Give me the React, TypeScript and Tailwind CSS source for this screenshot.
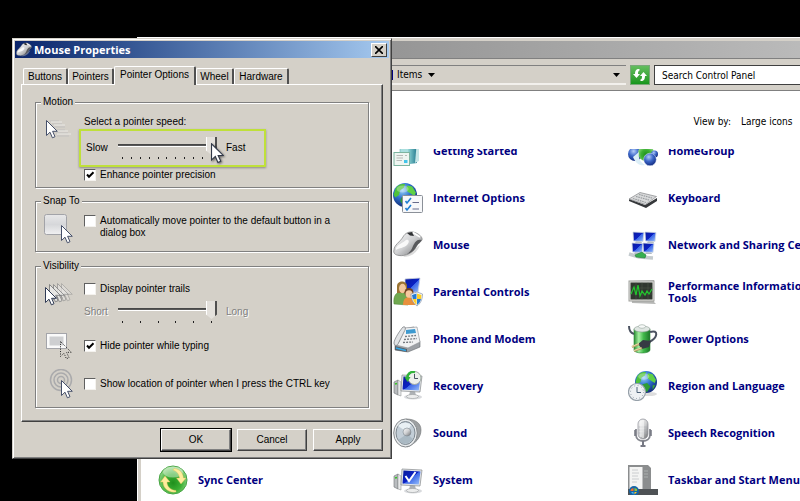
import type { ReactNode } from 'react'
import { clsx } from 'clsx'

/* ---------- Shared icon pieces ---------- */

function Gradients() {
  return (
    <svg className="absolute size-0" aria-hidden="true">
      <defs>
        <linearGradient id="silver" x1="0" y1="0" x2="1" y2="1">
          <stop offset="0" stopColor="#fdfdfd" />
          <stop offset=".5" stopColor="#cfd0d2" />
          <stop offset="1" stopColor="#6d6e70" />
        </linearGradient>
        <linearGradient id="screen" x1="0" y1="0" x2="1" y2="1">
          <stop offset="0" stopColor="#0a1a9c" />
          <stop offset=".5" stopColor="#0b22c4" />
          <stop offset=".52" stopColor="#3b66e8" />
          <stop offset="1" stopColor="#9cc4fb" />
        </linearGradient>
        <radialGradient id="ocean" cx=".4" cy=".3" r=".75">
          <stop offset="0" stopColor="#9fd4f7" />
          <stop offset=".45" stopColor="#2f74cf" />
          <stop offset="1" stopColor="#10256f" />
        </radialGradient>
        <radialGradient id="blueBall" cx=".4" cy=".3" r=".7">
          <stop offset="0" stopColor="#b4cdfa" />
          <stop offset=".5" stopColor="#3c67c8" />
          <stop offset="1" stopColor="#142c82" />
        </radialGradient>
        <radialGradient id="greenBall" cx=".5" cy=".6" r=".6">
          <stop offset="0" stopColor="#1f8f1c" />
          <stop offset=".5" stopColor="#3cb034" />
          <stop offset="1" stopColor="#9fdc94" />
        </radialGradient>
        <linearGradient id="battery" x1="0" y1="0" x2="1" y2="0">
          <stop offset="0" stopColor="#2b8f35" />
          <stop offset=".3" stopColor="#a5efa0" />
          <stop offset=".6" stopColor="#3fb849" />
          <stop offset="1" stopColor="#1d7529" />
        </linearGradient>
        <linearGradient id="book" x1="0" y1="0" x2="1" y2="0">
          <stop offset="0" stopColor="#8fd5d6" />
          <stop offset="1" stopColor="#23798e" />
        </linearGradient>
      </defs>
    </svg>
  )
}

function Icon({ children }: { children: ReactNode }) {
  return (
    <svg viewBox="0 0 30 30" className="size-[30px] shrink-0" aria-hidden="true">
      {children}
    </svg>
  )
}

const cursorPath = 'M.5 .5V15.5L4 12.2L6.4 17.8L9 16.7L6.6 11.3H11.3Z'

function Globe({ x, y, r }: { x: number; y: number; r: number }) {
  return (
    <g transform={`translate(${x} ${y}) scale(${r / 10})`}>
      <circle r="10" fill="url(#ocean)" />
      <path d="M-8 -5C-6 -9 -2 -9.500 0 -9L-1 -6L-4 -4L-5 0L-8 2L-9.500 0Z" fill="#4fc23a" />
      <path d="M2 -8L6 -7L9 -2L8 1L5 -1L2 -3L1 -6Z" fill="#5fd045" />
      <path d="M-3 2L1 1L4 4L1 9L-2 8L-4 5Z" fill="#2f9d35" />
      <path d="M6 3L8.500 3L6 7Z" fill="#3fae38" />
      <ellipse cx="-2" cy="-5" rx="5" ry="3" fill="#fff" opacity=".3" />
    </g>
  )
}

function Monitor() {
  return (
    <>
      <ellipse cx="20" cy="26" rx="9" ry="2.500" fill="#d8dadd" />
      <path d="M1 11L5 9V24L1 22Z" fill="#b9bcbf" stroke="#6f7276" strokeWidth=".6" />
      <path d="M5 9L8 11V25L5 24Z" fill="#e8e9ea" stroke="#85888b" strokeWidth=".5" />
      <path d="M2 13L4 12.500" stroke="#35c423" strokeWidth="1.500" />
      <path d="M17 20H22L23 25H16Z" fill="#aeb2b6" />
      <ellipse cx="19.500" cy="25.500" rx="6" ry="2" fill="#eceded" stroke="#9a9da0" strokeWidth=".6" />
      <path d="M9 4L29 5L27 21L8 20Z" fill="#e5e7e9" stroke="#85898d" strokeWidth=".7" />
      <path d="M10.500 5.500L27.500 6.500L25.800 19.500L9.500 18.500Z" fill="url(#screen)" />
    </>
  )
}

function MouseShape() {
  return (
    <>
      <path d="M10 27C18 27 24 23 27 15L20 20Z" fill="#b8b8b8" opacity=".5" />
      <path d="M1 20C1 15 7 12 10 7C12 3 16 1.500 20 2C25 3 30 7 29 10C27 13 25 13 23 17C20 23 12 26.500 6 25.500C2 25 0 23 1 20Z" fill="url(#silver)" stroke="#7b7c7e" strokeWidth=".7" />
      <path d="M28.500 10C24 8.500 22 12 20 16C18.500 20 17 22 14 24C20 22.500 22 19 24 15.500C25.500 13 28 12.500 28.500 10Z" fill="#58595c" />
      <path d="M14 3L17 5.500L21 6L19 2Z" fill="#303235" />
      <path d="M20 2.500L27 7" stroke="#fff" strokeWidth="1.500" />
      <path d="M3 18C5 14 10 13 13 10C16 9 17 12 14 15C11 18 6 18 3 20Z" fill="#fff" opacity=".85" />
    </>
  )
}

/* ---------- Control panel icons ---------- */

const icons: Record<string, ReactNode> = {
  start: (
    <>
      <path d="M7 3L16 1V22L7 22Z" fill="#a9dede" stroke="#57a3a8" strokeWidth=".5" />
      <path d="M15 2L24 0V27L17 28Z" fill="url(#book)" />
      <path d="M24 4L26 5V25L22 27Z" fill="#c5e5e6" />
      <rect x="1" y="16.500" width="15.500" height="13" fill="#eef5f1" stroke="#7db4a0" />
      <path d="M3.500 19.500H10M3.500 22H10M3.500 24.500H9M12 19.500H14" stroke="#aaa" strokeWidth=".8" />
      <rect x="11" y="24" width="3.500" height="3" fill="#42c4ea" />
    </>
  ),
  internet: (
    <>
      <Globe x={12} y={12} r={12} />
      <rect x="9.500" y="12.500" width="20" height="17" rx="1" fill="#f7f8fa" stroke="#8b9098" />
      <path d="M12.500 18L14 20L18 15M12.500 25L14 27L18 22" fill="none" stroke="#1f7dd1" strokeWidth="1.600" />
      <path d="M19.500 19.500H26M19.500 26H26" stroke="#676c8c" strokeWidth="1.200" />
    </>
  ),
  mouse: <MouseShape />,
  parental: (
    <>
      <path d="M12 2L27 1L25 15L12 16Z" fill="url(#screen)" stroke="#cdd3dc" strokeWidth=".8" />
      <path d="M1 27C0 19 3 15 8 15C13 15 16 19 15 28Z" fill="#70a950" stroke="#477c31" strokeWidth=".5" />
      <path d="M4 9C4 3 14 3 14 9V16H4Z" fill="#9a7332" />
      <ellipse cx="9.500" cy="11.500" rx="3.500" ry="4.700" fill="#f1c79d" />
      <path d="M10 28C10 22 13 20 16 20C19 20 22 23 22 28Z" fill="#e8903d" />
      <circle cx="16" cy="15.500" r="4.500" fill="#6e4222" />
      <ellipse cx="16" cy="17" rx="3.500" ry="3.700" fill="#f4c99f" />
      <path d="M18 17L24 15L29.500 17C29.500 23 27 27 24 29C20 26 18 22 18 17Z" fill="#f8f9fb" stroke="#8794a7" strokeWidth=".7" />
      <path d="M19 18L23.500 16.500V22H19.800ZM24 22H28C27.500 24.500 26 26.500 24 28Z" fill="#267bd4" />
      <path d="M24 16.500L28.500 18L28 22H24ZM19.800 22H23.500V28C21.500 26 20.500 24 19.800 22Z" fill="#ffcf28" />
    </>
  ),
  phone: (
    <>
      <path d="M2 21L9 5L21 3L27 18V23L15 28L2 26Z" fill="#9da1a6" stroke="#676b70" strokeWidth=".6" />
      <path d="M6 18L11 4L24 3L27 18L15 24L3 21Z" fill="#f1f2f3" stroke="#8b8f93" strokeWidth=".6" />
      <path d="M13 6L22 5L23 9L13 10Z" fill="#3e9ad0" />
      <path d="M1 19C1 15 8 5 10 3C13 2 13 5 11 8L5 20C4 22 1 22 1 19Z" fill="#e2e4e6" stroke="#707479" strokeWidth=".7" />
      <path d="M12 12.500L23 11.500M11 15.500L24 14.500M10 18.500L20 18" stroke="#74797f" strokeWidth="1.300" strokeDasharray="2 1.100" />
      <path d="M2 22L14 25V28L2 26Z" fill="#5b6066" />
      <path d="M3 24L13 26.500" stroke="#35a7e6" strokeWidth="1.800" />
    </>
  ),
  recovery: (
    <>
      <Monitor />
      <circle cx="21.500" cy="7" r="6.500" fill="#edf0ec" stroke="#a1aba3" />
      <path d="M21.500 3V7.500H25" fill="none" stroke="#4a5563" />
      <path d="M22 1C17 0 14 4 14.500 7" fill="none" stroke="#32b43b" strokeWidth="2.500" />
      <path d="M11.500 6H17.500L14.500 11Z" fill="#32b43b" />
    </>
  ),
  sound: (
    <>
      <path d="M13 1C22 1 28 5 28 12C28 20 22 26 14 29Z" fill="#9da0a2" stroke="#6f7274" strokeWidth=".6" />
      <ellipse cx="12.500" cy="15" rx="11.800" ry="14" fill="#e8ebed" stroke="#85898c" />
      <ellipse cx="12.500" cy="15" rx="9.500" ry="11.500" fill="#c3ced7" stroke="#7b858d" />
      <path d="M5 8C8 4 15 4 18 7L14 14Z" fill="#e9f0f4" />
      <path d="M5 22C8 27 16 27 20 21L14 16Z" fill="#aab9c3" />
      <circle cx="14" cy="14" r="4" fill="url(#silver)" stroke="#7c8890" strokeWidth=".6" />
    </>
  ),
  system: (
    <>
      <Monitor />
      <path d="M12.500 11L16 16L22.500 7" fill="none" stroke="#fff" strokeWidth="2" />
    </>
  ),
  home: (
    <>
      <circle cx="7" cy="18" r="7" fill="url(#blueBall)" />
      <circle cx="18" cy="17" r="8" fill="url(#greenBall)" />
      <path d="M5 21C8 28 12 30 17 29C12 26 10 22 11 16Z" fill="#dceef7" />
      <circle cx="26.500" cy="18" r="3.500" fill="url(#blueBall)" />
      <circle cx="22" cy="23.500" r="6.300" fill="url(#blueBall)" stroke="#e3edfa" strokeWidth=".5" />
    </>
  ),
  keyboard: (
    <>
      <path d="M1 18L18 25L29 18V15L17 22L1 16Z" fill="#36383b" />
      <path d="M1 16L12 9.500L28.500 13.500L17.500 21.500Z" fill="#d9dadb" stroke="#858789" strokeWidth=".7" />
      <path d="M5 15.500L18 19.500M8 13.500L21 17M11 11.500L24 15" stroke="#9a9da0" strokeWidth="1.200" strokeDasharray="1.600 .8" />
    </>
  ),
  network: (
    <>
      {[[5, 2], [17, 2], [4, 13], [15, 13]].map(([x, y]) => (
        <g key={`${x}-${y}`} transform={`translate(${x} ${y})`}>
          <path d="M3 9H8L9 11H2Z" fill="#b3bac1" />
          <path d="M0 0L11 .5L10 9.500L.5 9Z" fill="url(#screen)" stroke="#d3dae2" strokeWidth=".8" />
        </g>
      ))}
      <path d="M1 24L11 27L25 28" fill="none" stroke="#c4cbce" strokeWidth="3.500" />
      <path d="M7 25L14 22L18 25L17 28L8 27Z" fill="#36ae4e" stroke="#1c7e32" strokeWidth=".6" />
    </>
  ),
  performance: (
    <>
      <path d="M2 4L26 3V25L28 27L4 26Z" fill="#b6b7b5" />
      <rect x="1" y="4" width="25" height="20" fill="#e5e5e2" stroke="#a0a19d" />
      <rect x="2.500" y="5.500" width="22" height="17" fill="#30362f" />
      <path d="M8 5.500V22.500M14 5.500V22.500M20 5.500V22.500M2.500 11H24.500M2.500 17H24.500" stroke="#566054" strokeWidth=".4" />
      <path d="M3 17L6 10L8 18L10 8L12 19L14 14L17 18L19 14L21 17L24 12" fill="none" stroke="#21c82d" strokeWidth="1.200" />
    </>
  ),
  power: (
    <>
      <path d="M6 5H22V26C22 30 6 30 6 26Z" fill="url(#battery)" stroke="#298633" strokeWidth=".6" />
      <ellipse cx="14" cy="5" rx="8" ry="3" fill="#dfe6e2" stroke="#899b91" strokeWidth=".6" />
      <ellipse cx="14" cy="2.500" rx="3.500" ry="1.800" fill="#f7f9f8" stroke="#96a49c" strokeWidth=".6" />
      <path d="M1 2C1 7 3 9 6 10M22 8C31 5 30 14 21 18" fill="none" stroke="#4b5260" strokeWidth="2" />
      <path d="M10 20L15 16L23 17L21 23L14 25Z" fill="#363a43" />
      <path d="M4 23L11 20M6 27L14 24" stroke="#b6a16a" strokeWidth="2.300" />
      <path d="M4 22.500L11 19.500M6 26.500L13 24" stroke="#f5eab7" strokeWidth=".8" />
    </>
  ),
  region: (
    <>
      <ellipse cx="21" cy="23" rx="8" ry="2" fill="#ddd" />
      <Globe x={18} y={11} r={11} />
      <circle cx="9" cy="21" r="8.500" fill="#eef1f4" stroke="#96a0a9" strokeWidth="1.200" />
      <circle cx="9" cy="21" r="6.500" fill="none" stroke="#758392" strokeWidth="1" strokeDasharray=".7 2.700" />
      <path d="M9 16V21.500H13" fill="none" stroke="#4b6078" />
    </>
  ),
  speech: (
    <>
      <path d="M8 11V17C8 25 22 25 22 17V11" fill="none" stroke="#85878f" strokeWidth="1.800" />
      <rect x="10" y="1" width="10" height="20" rx="5" fill="url(#silver)" stroke="#898b94" strokeWidth=".7" />
      <path d="M10.500 9H19.500M10.500 12H19.500M10.500 15H19.500" stroke="#aaacb3" strokeWidth=".6" />
      <path d="M13 2.500V19M15 2V20" stroke="#fff" strokeWidth="1" />
      <path d="M7 12V18M23 12V18" stroke="#737580" strokeWidth="1.500" />
      <path d="M15 23V27M12.500 28H17.500" stroke="#777984" strokeWidth="2" />
    </>
  ),
  taskbar: (
    <>
      <path d="M0 0H20L23 3V25H0Z" fill="#8b8d8e" />
      <rect x="1.500" y="2" width="13" height="22" fill="#f4f4f3" />
      <path d="M4 5H10M4 8H11M4 11H10M4 14H11M4 17H9" stroke="#c2c4c5" strokeWidth=".8" />
      <path d="M16 6H20M16 9H20M16 12H20" stroke="#c4c6c7" strokeWidth=".6" />
      <path d="M0 24H30V30H0Z" fill="#4e5255" />
      <circle cx="6" cy="26" r="5" fill="#1765a5" />
      <path d="M3 24L5.500 23V26H2.500Z" fill="#f36b2a" />
      <path d="M6.500 23L9 24V26H6.500Z" fill="#8cc63e" />
      <path d="M3 27H5.500V29.500Z" fill="#4cb8ef" />
      <path d="M6.500 27H9L6.500 29.500Z" fill="#ffc928" />
    </>
  ),
  sync: (
    <>
      <circle cx="15" cy="15" r="14" fill="url(#greenBall)" stroke="#48a544" />
      <ellipse cx="15" cy="7" rx="10" ry="5.500" fill="#fff" opacity=".4" />
      <path d="M16 3.500C22 4 25 8 25.500 13H28L23 19L18.500 13H21.500C21 9 19 6.500 15 5Z" fill="#ffec9c" stroke="#dfbe50" strokeWidth=".4" />
      <path d="M18 27C10 28 5 23 5 17H2.500L7 11L12 17H9C9 22 13 25 18 25.500Z" fill="#ffec9c" stroke="#dfbe50" strokeWidth=".4" />
    </>
  ),
}

const columns = [
  [{ name: 'Sync Center', icon: 'sync' }],
  [
    { name: 'Getting Started', icon: 'start' },
    { name: 'Internet Options', icon: 'internet' },
    { name: 'Mouse', icon: 'mouse' },
    { name: 'Parental Controls', icon: 'parental' },
    { name: 'Phone and Modem', icon: 'phone' },
    { name: 'Recovery', icon: 'recovery' },
    { name: 'Sound', icon: 'sound' },
    { name: 'System', icon: 'system' },
  ],
  [
    { name: 'HomeGroup', icon: 'home' },
    { name: 'Keyboard', icon: 'keyboard' },
    { name: 'Network and Sharing Center', icon: 'network' },
    { name: 'Performance Information and Tools', icon: 'performance' },
    { name: 'Power Options', icon: 'power' },
    { name: 'Region and Language', icon: 'region' },
    { name: 'Speech Recognition', icon: 'speech' },
    { name: 'Taskbar and Start Menu', icon: 'taskbar' },
  ],
]

function Caret() {
  return (
    <svg viewBox="0 0 7 4" className="h-1 w-[7px]" aria-hidden="true">
      <path d="M0 0H7L3.500 4Z" fill="#000" />
    </svg>
  )
}

function ControlPanel() {
  return (
    <section className="absolute top-[37px] -right-16 bottom-0 left-[137px] flex flex-col border-t border-l border-white bg-[#d4d0c8] pt-[3px] pl-[3px] font-['DejaVu_Sans_Condensed','Noto_Sans',sans-serif] text-[10px]">
      <div className="h-[17px] bg-linear-to-r from-[#808080] to-[#c0c0c0]" />

      {/* Address bar */}
      <div className="flex gap-1 border-y border-[#808080] pt-[6px] pr-[10px] pb-[5px]">
        <div className="flex h-5 flex-1 items-center border-t border-b-2 border-t-[#808080] border-b-[#f2f0ec] pl-[251px]">
          <span className="mr-1 h-[10px] w-px bg-[#00007f]" />
          <span className="mr-[6px]">Items</span>
          <Caret />
          <button type="button" aria-label="Previous locations" className="mr-[6px] ml-auto">
            <Caret />
          </button>
        </div>
        <button type="button" aria-label="Refresh" className="flex h-5 w-5 items-center justify-center border border-[#79a878] bg-linear-to-b from-[#62bd5d] to-[#14961a]">
          <svg viewBox="0 0 16 14" className="h-[14px] w-4" aria-hidden="true">
            <path d="M7 1C4 1 3 3 3 6H1L4.500 10L8 6H6C6 4 6 3 8 2ZM9 13C12 13 13 11 13 8H15L11.500 4L8 8H10C10 10 10 11 8 12Z" fill="#fff" />
          </svg>
        </button>
        <input
          type="text"
          aria-label="Search"
          defaultValue="Search Control Panel"
          className="h-5 w-[200px] border border-[#404040] bg-white px-[7px] outline-none"
        />
      </div>

      <div className="flex min-h-0 flex-1 flex-col bg-white">
        <div className="flex h-[58px] shrink-0 items-center justify-end gap-[10px] pt-0.5 pr-[43px]">
          <label htmlFor="view">View by:</label>
          <select id="view" className="w-20 appearance-none outline-none">
            <option>Large icons</option>
          </select>
        </div>
        {/* List is scrolled by half a row */}
        <div className="min-h-0 flex-1 overflow-hidden">
          <div className="-mt-[22px] flex pl-[17px]">
            {columns.map((items, i) => (
              <ul key={i} className="flex w-[235px] shrink-0 flex-col justify-end">
                {items.map((item) => (
                  <li key={item.name}>
                    <a href="#" className="flex h-[47px] items-center gap-[10px] font-['Open_Sans','Noto_Sans',sans-serif] text-[11px] leading-3 font-bold text-[#00007f]">
                      <Icon>{icons[item.icon]}</Icon>
                      {item.name}
                    </a>
                  </li>
                ))}
              </ul>
            ))}
          </div>
        </div>
      </div>
    </section>
  )
}

/* ---------- Mouse properties dialog ---------- */

function Group({ title, className, children }: { title: string; className?: string; children: ReactNode }) {
  return (
    <fieldset className={clsx('border border-[#808080] px-2 shadow-[1px_1px_0_#fff,inset_1px_1px_0_#fff]', className)}>
      <legend className="-ml-[3px] bg-[#d4d0c8] px-0.5 leading-[14px]">{title}</legend>
      {children}
    </fieldset>
  )
}

function Checkbox({ label, checked }: { label: string; checked?: boolean }) {
  return (
    <label className="flex max-w-[250px] items-start gap-1 py-px leading-3">
      <span className="relative size-3 shrink-0">
        <input
          type="checkbox"
          defaultChecked={checked}
          className="peer block size-3 appearance-none border border-t-[#606060] border-r-[#f4f2ee] border-b-[#f4f2ee] border-l-[#606060] bg-white"
        />
        <svg viewBox="0 0 12 12" className="pointer-events-none absolute inset-0 hidden size-3 peer-checked:block" aria-hidden="true">
          <path d="M3 5.500L5 7.700L9.500 3.200" fill="none" stroke="#000" strokeWidth="2" />
        </svg>
      </span>
      {label}
    </label>
  )
}

function Slider({ label, from, to, ticks, disabled }: { label: string; from: string; to: string; ticks: number; disabled?: boolean }) {
  return (
    <div className={clsx('flex items-start', disabled && 'text-[#808080] [text-shadow:1px_1px_0_#fff]')}>
      <span className={clsx('w-[34px] pt-1', !disabled && 'pl-0.5')}>{from}</span>
      <div className="w-[99px]">
        <input
          type="range"
          aria-label={label}
          defaultValue={100}
          disabled={disabled}
          className="block h-[18px] w-full appearance-none bg-[linear-gradient(to_bottom,transparent_7px,#404040_7px,#606060_9px,#fff_9px,#fff_10px,transparent_10px)] [&::-webkit-slider-thumb]:h-[18px] [&::-webkit-slider-thumb]:w-[11px] [&::-webkit-slider-thumb]:appearance-none [&::-webkit-slider-thumb]:bg-[linear-gradient(to_right,#fff_1px,#e4e1dc_1px,#e4e1dc_9px,#505050_9px)] [&::-webkit-slider-thumb]:[clip-path:polygon(0_0,100%_0,100%_75%,50%_100%,0_75%)]"
        />
        <div className="mt-0.5 flex justify-between pr-[5px] pl-1">
          {Array.from({ length: ticks }, (_, i) => (
            <span key={i} className="h-0.5 w-px bg-[#202020]" />
          ))}
        </div>
      </div>
      <span className="pt-1 pl-[9px]">{to}</span>
    </div>
  )
}

function Cursor({ className }: { className?: string }) {
  return (
    <svg viewBox="0 0 12 19" className={clsx('h-[21px] w-[13px] drop-shadow-[1px_1px_1px_#0008]', className)} aria-hidden="true">
      <path d={cursorPath} fill="#fff" stroke="#303848" />
    </svg>
  )
}

function Tabs() {
  return (
    <div role="tablist" className="flex items-end pl-0.5">
      {[
        { name: 'Buttons', width: 'w-[45px]' },
        { name: 'Pointers', width: 'w-[46px]' },
        { name: 'Pointer Options', width: 'w-[82px]' },
        { name: 'Wheel', width: 'w-[38px]' },
        { name: 'Hardware', width: 'w-[55px]' },
      ].map(({ name, width }) => {
        const active = name === 'Pointer Options'
        return (
          <button
            key={name}
            type="button"
            role="tab"
            aria-selected={active}
            className={clsx(
              'rounded-t-xs border-t border-r-2 border-l border-t-white border-r-[#505050] border-l-white text-center whitespace-nowrap',
              width,
              active ? 'relative z-10 -mb-px h-[19px] bg-[#d4d0c8] pb-0.5' : 'h-4',
            )}
          >
            {name}
          </button>
        )
      })}
    </div>
  )
}

const buttonClass =
  'h-[22px] w-[70px] border border-t-white border-r-[#404040] border-b-[#404040] border-l-white shadow-[inset_-1px_-1px_0_#808080]'

function MouseProperties() {
  return (
    <section
      role="dialog"
      aria-labelledby="title"
      className="absolute top-[38px] left-3 w-[380px] border border-t-[#d4d0c8] border-r-[#404040] border-b-[#404040] border-l-[#d4d0c8] bg-[#d4d0c8] p-px font-['Liberation_Sans',Arial,sans-serif] text-[10px] leading-[14px] text-black shadow-[inset_1px_1px_0_#fff,inset_-1px_-1px_0_#808080]"
    >
      <header className="mx-px mt-px flex h-[17px] items-center bg-linear-to-r from-[#0a246a] to-[#a6caf0] pr-0.5 pl-px">
        <svg viewBox="0 0 30 30" className="size-4" aria-hidden="true">
          <MouseShape />
        </svg>
        <h1 id="title" className="ml-0.5 font-['Open_Sans','Noto_Sans',sans-serif] text-[11px] font-bold text-white">
          Mouse Properties
        </h1>
        <button
          type="button"
          aria-label="Close"
          className="ml-auto flex h-[14px] w-4 items-center justify-center border border-t-white border-r-[#404040] border-b-[#404040] border-l-white bg-[#d4d0c8]"
        >
          <svg viewBox="0 0 8 8" className="size-2" aria-hidden="true">
            <path d="M0 0L8 8M8 0L0 8" stroke="#000" strokeWidth="1.600" />
          </svg>
        </button>
      </header>

      <div className="px-[7px] pt-2 pb-[6px]">
        <Tabs />
        <div role="tabpanel" className="border border-t-white border-r-[#404040] border-b-[#404040] border-l-white px-[13px] pt-[10px] pb-[13px] shadow-[inset_-1px_-1px_0_#808080]">
          <Group title="Motion" className="pb-[5px]">
            <div className="flex pt-[6px]">
              <svg viewBox="0 0 30 24" className="mt-1 ml-px h-6 w-[30px] shrink-0" aria-hidden="true">
                <path d="M5 2H14M7 5H17M9 8H20M11 11H20M11 14H23M12 17H24" stroke="#c2c1c0" />
                <path d="M6 3H17M9 6H20M12 12H23M12 15H26" stroke="#e9e8e5" />
                <path d={cursorPath} transform="translate(1 1)" fill="#fff" stroke="#46506a" />
              </svg>
              <div className="ml-[9px]">
                <p>Select a pointer speed:</p>
                <div className="relative mt-2 mb-[9px]">
                  <Slider label="Pointer speed" from="Slow" to="Fast" ticks={11} />
                  <div className="pointer-events-none absolute -top-2 -left-[5px] h-[38px] w-[187px] border-2 border-[#bfe03a] shadow-[0_1px_2px_#0005]" />
                  <Cursor className="pointer-events-none absolute top-[6px] left-[127px]" />
                </div>
                <Checkbox label="Enhance pointer precision" checked />
              </div>
            </div>
          </Group>

          <Group title="Snap To" className="mt-[6px] pb-[7px]">
            <div className="flex pt-[6px]">
              <svg viewBox="0 0 30 30" className="size-[30px] shrink-0" aria-hidden="true">
                <defs>
                  <linearGradient id="key" x1="0" y1="0" x2="0" y2="1">
                    <stop offset="0" stopColor="#e8e8e9" />
                    <stop offset=".5" stopColor="#d6d7da" />
                    <stop offset="1" stopColor="#f1f1f2" />
                  </linearGradient>
                </defs>
                <rect x=".5" y=".5" width="22" height="20" rx="2" fill="url(#key)" stroke="#a2a3a8" />
                <path d={cursorPath} transform="translate(17 11)" fill="#fff" stroke="#46506a" />
              </svg>
              <div className="ml-[10px]">
                <Checkbox label="Automatically move pointer to the default button in a dialog box" />
              </div>
            </div>
          </Group>

          <Group title="Visibility" className="mt-[7px] pb-2">
            <div className="flex flex-col gap-[9px] pt-[9px]">
              <div className="flex gap-[10px]">
                <svg viewBox="0 0 30 26" className="h-[26px] w-[30px] shrink-0" aria-hidden="true">
                  {[17, 13, 9, 5].map((x, i) => (
                    <path key={x} d={cursorPath} transform={`translate(${x} ${i < 2 ? 1 : 2})`} fill="#e9e8e6" stroke="#68696d" strokeWidth=".8" opacity={0.4 + i * 0.18} />
                  ))}
                  <path d={cursorPath} transform="translate(1 5)" fill="#fff" stroke="#303b55" />
                </svg>
                <div>
                  <Checkbox label="Display pointer trails" />
                  <div className="mt-[5px]">
                    <Slider label="Pointer trail length" from="Short" to="Long" ticks={6} disabled />
                  </div>
                </div>
              </div>
              <div className="flex items-center gap-[10px]">
                <svg viewBox="0 0 30 28" className="h-7 w-[30px] shrink-0" aria-hidden="true">
                  <rect x="2.500" y="1.500" width="20" height="15" fill="#fafafa" stroke="#a4a5aa" />
                  <rect x="5.500" y="4.500" width="14" height="9" fill="#cecfd1" />
                  <path d={cursorPath} transform="translate(16 9)" fill="none" stroke="#202020" strokeDasharray="1 1.400" />
                </svg>
                <Checkbox label="Hide pointer while typing" checked />
              </div>
              <div className="flex items-center gap-[10px]">
                <svg viewBox="0 0 30 30" className="size-[30px] shrink-0" aria-hidden="true">
                  <g fill="none" stroke="#aaaaac" strokeWidth="1.500">
                    <circle cx="17" cy="11" r="10.500" />
                    <circle cx="17" cy="11" r="7" />
                    <circle cx="17" cy="11" r="3.500" />
                  </g>
                  <path d={cursorPath} transform="translate(17 11)" fill="#fff" stroke="#46506a" />
                </svg>
                <Checkbox label="Show location of pointer when I press the CTRL key" />
              </div>
            </div>
          </Group>
        </div>

        <div className="mt-[7px] flex justify-end gap-[6px]">
          <button type="button" className={clsx(buttonClass, 'outline outline-black')}>OK</button>
          <button type="button" className={buttonClass}>Cancel</button>
          <button type="button" className={buttonClass}>Apply</button>
        </div>
      </div>
    </section>
  )
}

export default function App() {
  return (
    <main className="relative h-screen min-h-[501px] overflow-hidden bg-black text-black">
      <Gradients />
      <ControlPanel />
      <MouseProperties />
    </main>
  )
}
